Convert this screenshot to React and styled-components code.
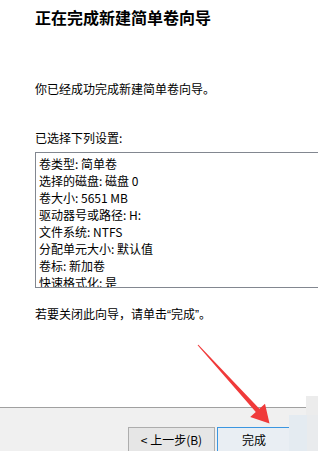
import React from "react";
import styled, { createGlobalStyle } from "styled-components";

const Global = createGlobalStyle`
  html, body { margin: 0; padding: 0; background: #fff; }
  body { font-family: "Noto Sans CJK SC", "Microsoft YaHei", sans-serif; }
`;

const Page = styled.div`
  position: relative;
  width: 318px;
  height: 451px;
  overflow: hidden;
  display: flex;
  flex-direction: column;
  background: #fff;
  color: #000;
`;

const Content = styled.div`
  flex: 1;
  padding: 6px 0 0 35px;
  display: flex;
  flex-direction: column;
`;

const Title = styled.h1`
  margin: 0;
  font-size: 16px;
  font-weight: 700;
  line-height: 22px;
  letter-spacing: 0;
`;

const Text = styled.p`
  margin: ${(p) => p.$top}px 0 0;
  font-size: 12px;
  line-height: 17px;
`;

const Quote = styled.span`
  font-family: "Liberation Sans", sans-serif;
`;

const ListBox = styled.div`
  margin-top: 6px;
  width: 290px;
  height: 132px;
  border: 1px solid #828790;
  padding: 2px 0 0 3px;
  box-sizing: content-box;
  overflow: hidden;
`;

const Item = styled.div`
  font-size: 12px;
  line-height: 17px;
  white-space: nowrap;
`;

const Footer = styled.div`
  height: 44px;
  border-top: 1px solid #a0a0a0;
  background: #f0f0f0;
  display: flex;
  gap: 2px;
  padding: 19px 0 0 128px;
  box-sizing: border-box;
  margin-right: 12px;
`;

const Button = styled.button`
  width: ${(p) => p.$w}px;
  height: 26px;
  box-sizing: border-box;
  border: 1px solid ${(p) => (p.$default ? "#3c96e0" : "#adadad")};
  background: ${(p) => (p.$default ? "#e9eef3" : "#e6e6e6")};
  font-family: "Noto Sans CJK SC", sans-serif;
  font-size: 12px;
  color: #000;
  padding: 0;
  line-height: 22px;
`;

const Overlay = styled.svg`
  position: absolute;
  left: 0;
  top: 0;
  pointer-events: none;
`;

const items = [
  "卷类型: 简单卷",
  "选择的磁盘: 磁盘 0",
  "卷大小: 5651 MB",
  "驱动器号或路径: H:",
  "文件系统: NTFS",
  "分配单元大小: 默认值",
  "卷标: 新加卷",
  "快速格式化: 是",
];

export default function App() {
  return (
    <>
      <Global />
      <Page>
        <Content>
          <Title>正在完成新建简单卷向导</Title>
          <Text $top={52}>你已经成功完成新建简单卷向导。</Text>
          <Text $top={32}>已选择下列设置:</Text>
          <ListBox>
            {items.map((t) => (
              <Item key={t}>{t}</Item>
            ))}
          </ListBox>
          <Text $top={17}>
            若要关闭此向导，请单击<Quote>“</Quote>完成<Quote>”</Quote>。
          </Text>
        </Content>
        <Footer>
          <Button $w={87}>&lt; 上一步(B)</Button>
          <Button $w={74} $default>完成</Button>
        </Footer>
        <Overlay width="318" height="451" viewBox="0 0 318 451">
          <rect x="306" y="396" width="12" height="19" fill="#ececec" />
          <rect x="289" y="415" width="18" height="36" fill="#e4ebf1" />
          <rect x="307" y="415" width="11" height="36" fill="#e9ebed" />
          <polygon
            points="197.6,345.3 255.8,412.1 250.2,417.1 269.5,423.5 265,403.7 259.4,408.7 198.4,344.7"
            fill="#f03a3a"
          />
        </Overlay>
      </Page>
    </>
  );
}
